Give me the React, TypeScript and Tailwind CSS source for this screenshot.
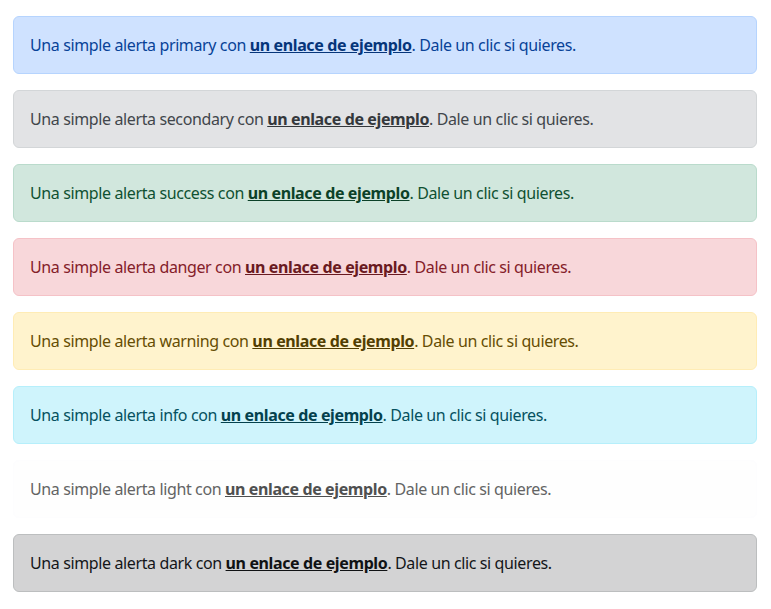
import React from "react";

type Variant = {
  name: string;
  box: string;
  link: string;
};

const variants: Variant[] = [
  { name: "primary", box: "bg-[#cfe2ff] border-[#b6d4fe] text-[#084298]", link: "text-[#06357a]" },
  { name: "secondary", box: "bg-[#e2e3e5] border-[#d3d6d8] text-[#41464b]", link: "text-[#34383c]" },
  { name: "success", box: "bg-[#d1e7dd] border-[#badbcc] text-[#0f5132]", link: "text-[#0c4128]" },
  { name: "danger", box: "bg-[#f8d7da] border-[#f5c2c7] text-[#842029]", link: "text-[#6a1a21]" },
  { name: "warning", box: "bg-[#fff3cd] border-[#ffecb5] text-[#664d03]", link: "text-[#523e02]" },
  { name: "info", box: "bg-[#cff4fc] border-[#b6effb] text-[#055160]", link: "text-[#04414d]" },
  { name: "light", box: "bg-[#fefefe] border-[#fdfdfe] text-[#636464]", link: "text-[#4f5050]" },
  { name: "dark", box: "bg-[#d3d3d4] border-[#bcbebf] text-[#141619]", link: "text-[#101214]" },
];

export default function App() {
  return (
    <div className="min-h-screen bg-white font-['Noto_Sans',sans-serif] text-base leading-6 tracking-[-0.38px]">
      <div className="ml-[13px] mr-[14px] flex flex-col gap-4 pt-4">
        {variants.map((v) => (
          <div key={v.name} role="alert" className={`rounded-md border p-4 ${v.box}`}>
            Una simple alerta {v.name} con{" "}
            <a href="#" className={`font-bold underline ${v.link}`}>
              un enlace de ejemplo
            </a>
            . Dale un clic si quieres.
          </div>
        ))}
      </div>
    </div>
  );
}
